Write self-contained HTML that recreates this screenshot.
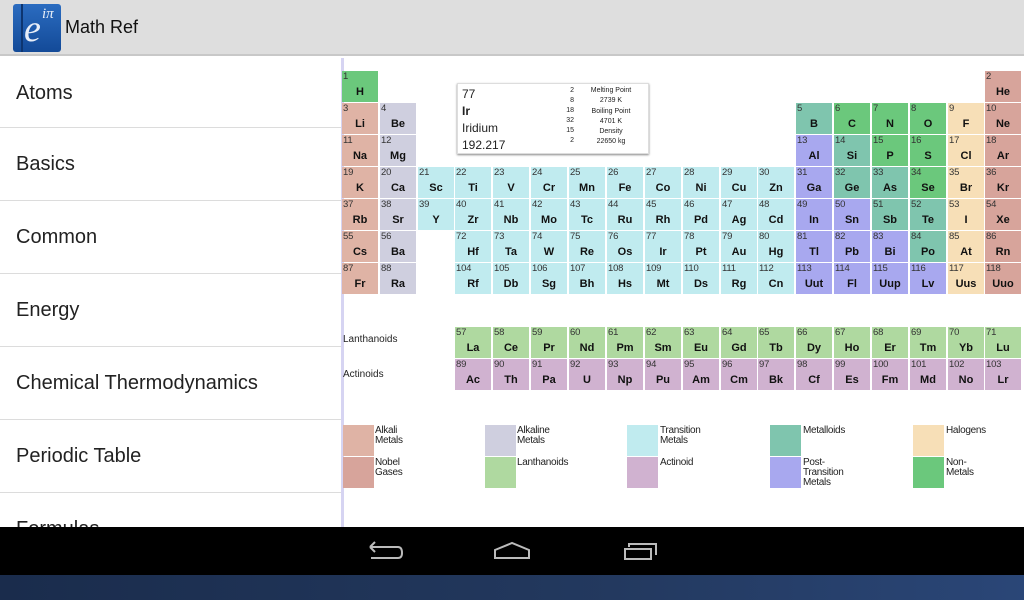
<!DOCTYPE html>
<html><head><meta charset="utf-8"><style>
*{margin:0;padding:0;box-sizing:border-box}
body{width:1024px;height:600px;overflow:hidden;background:#fff;font-family:"Liberation Sans",sans-serif;position:relative}
.top{position:absolute;left:0;top:0;width:1024px;height:56px;background:#dedede;border-bottom:2px solid #c8c8c8}
.logo{position:absolute;left:13px;top:4px;width:48px;height:48px;border-radius:3px;background:linear-gradient(#2b6cc0,#134a98);overflow:hidden}
.logo:before{content:"";position:absolute;left:8px;top:0;width:2px;height:48px;background:#0d3570}
.logo span{position:absolute;left:11px;top:3px;color:#e8eef8;font:italic 38px "Liberation Serif",serif}
.logo sup{position:absolute;left:29px;top:2px;color:#e8eef8;font:italic 15px "Liberation Serif",serif}
.title{position:absolute;left:65px;top:17px;font-size:18px;color:#111}
.side{position:absolute;left:0;top:58px;width:341px;height:469px;overflow:hidden;background:#fff}
.side div{height:73px;border-bottom:1px solid #dcdcdc;font-size:20px;color:#222;padding-left:16px;line-height:72px}
.side div:first-child{height:70px;line-height:70px}
.vl{position:absolute;left:341px;top:58px;width:3px;height:469px;background:#d6d4f2}
.r{position:absolute;left:0;width:1024px}
.k{position:absolute;width:36px;height:31px;font-weight:bold;font-size:11px;text-align:center;padding-top:14px;line-height:14px;color:#111}
.k i{position:absolute;left:1px;top:0;font-style:normal;font-weight:normal;font-size:9.5px;line-height:11px;color:#333;letter-spacing:-.2px}
.a{background:#dfb3a5}.e{background:#cfcfdf}.t{background:#c0ebef}.m{background:#7fc5ae}.n{background:#6bc87c}.h{background:#f7dfb7}.g{background:#d7a49b}.p{background:#a8a8ef}.l{background:#afd9a0}.x{background:#d0b2d0}
.pop{position:absolute;left:457px;top:83px;width:192px;height:71px;background:#fff;border:1px solid #ddd;box-shadow:0 1px 2px #888;font-size:12px;color:#222}
.pop .b{position:absolute;left:4px;top:2px;line-height:17px}
.pop .s{position:absolute;left:100px;top:2px;width:16px;text-align:right;font-size:7px;line-height:10px}
.pop .d{position:absolute;left:120px;top:2px;width:66px;text-align:center;font-size:7px;line-height:10.3px}
.lab{position:absolute;left:343px;font-size:10px;color:#222}
.lg{position:absolute;width:31px;height:31px}
.lt{position:absolute;font-size:10px;line-height:10px;color:#222;letter-spacing:-.3px}
.nav{position:absolute;left:0;top:527px;width:1024px;height:48px;background:#000}
.bg{position:absolute;left:0;top:575px;width:1024px;height:25px;background:linear-gradient(90deg,#1a2c4c,#23395f 60%,#2a4677)}
</style></head><body>
<div class="top"><div class="logo"><span>e</span><sup>iπ</sup></div><div class="title">Math Ref</div></div>
<div class="side"><div>Atoms</div><div>Basics</div><div>Common</div><div>Energy</div><div>Chemical Thermodynamics</div><div>Periodic Table</div><div>Formulas</div></div>
<div class="vl"></div>

<div class="r" style="top:71px">
<div class="k n" style="left:342px"><i>1</i>H</div>
<div class="k g" style="left:985px"><i>2</i>He</div>
</div>
<div class="r" style="top:103px">
<div class="k a" style="left:342px"><i>3</i>Li</div><div class="k e" style="left:380px"><i>4</i>Be</div>
<div class="k m" style="left:796px"><i>5</i>B</div><div class="k n" style="left:834px"><i>6</i>C</div><div class="k n" style="left:872px"><i>7</i>N</div><div class="k n" style="left:910px"><i>8</i>O</div><div class="k h" style="left:948px"><i>9</i>F</div><div class="k g" style="left:985px"><i>10</i>Ne</div>
</div>
<div class="r" style="top:135px">
<div class="k a" style="left:342px"><i>11</i>Na</div><div class="k e" style="left:380px"><i>12</i>Mg</div>
<div class="k p" style="left:796px"><i>13</i>Al</div><div class="k m" style="left:834px"><i>14</i>Si</div><div class="k n" style="left:872px"><i>15</i>P</div><div class="k n" style="left:910px"><i>16</i>S</div><div class="k h" style="left:948px"><i>17</i>Cl</div><div class="k g" style="left:985px"><i>18</i>Ar</div>
</div>
<div class="r" style="top:167px">
<div class="k a" style="left:342px"><i>19</i>K</div><div class="k e" style="left:380px"><i>20</i>Ca</div>
<div class="k t" style="left:418px"><i>21</i>Sc</div><div class="k t" style="left:455px"><i>22</i>Ti</div><div class="k t" style="left:493px"><i>23</i>V</div><div class="k t" style="left:531px"><i>24</i>Cr</div><div class="k t" style="left:569px"><i>25</i>Mn</div><div class="k t" style="left:607px"><i>26</i>Fe</div><div class="k t" style="left:645px"><i>27</i>Co</div><div class="k t" style="left:683px"><i>28</i>Ni</div><div class="k t" style="left:721px"><i>29</i>Cu</div><div class="k t" style="left:758px"><i>30</i>Zn</div>
<div class="k p" style="left:796px"><i>31</i>Ga</div><div class="k m" style="left:834px"><i>32</i>Ge</div><div class="k m" style="left:872px"><i>33</i>As</div><div class="k n" style="left:910px"><i>34</i>Se</div><div class="k h" style="left:948px"><i>35</i>Br</div><div class="k g" style="left:985px"><i>36</i>Kr</div>
</div>
<div class="r" style="top:199px">
<div class="k a" style="left:342px"><i>37</i>Rb</div><div class="k e" style="left:380px"><i>38</i>Sr</div>
<div class="k t" style="left:418px"><i>39</i>Y</div><div class="k t" style="left:455px"><i>40</i>Zr</div><div class="k t" style="left:493px"><i>41</i>Nb</div><div class="k t" style="left:531px"><i>42</i>Mo</div><div class="k t" style="left:569px"><i>43</i>Tc</div><div class="k t" style="left:607px"><i>44</i>Ru</div><div class="k t" style="left:645px"><i>45</i>Rh</div><div class="k t" style="left:683px"><i>46</i>Pd</div><div class="k t" style="left:721px"><i>47</i>Ag</div><div class="k t" style="left:758px"><i>48</i>Cd</div>
<div class="k p" style="left:796px"><i>49</i>In</div><div class="k p" style="left:834px"><i>50</i>Sn</div><div class="k m" style="left:872px"><i>51</i>Sb</div><div class="k m" style="left:910px"><i>52</i>Te</div><div class="k h" style="left:948px"><i>53</i>I</div><div class="k g" style="left:985px"><i>54</i>Xe</div>
</div>
<div class="r" style="top:231px">
<div class="k a" style="left:342px"><i>55</i>Cs</div><div class="k e" style="left:380px"><i>56</i>Ba</div>
<div class="k t" style="left:455px"><i>72</i>Hf</div><div class="k t" style="left:493px"><i>73</i>Ta</div><div class="k t" style="left:531px"><i>74</i>W</div><div class="k t" style="left:569px"><i>75</i>Re</div><div class="k t" style="left:607px"><i>76</i>Os</div><div class="k t" style="left:645px"><i>77</i>Ir</div><div class="k t" style="left:683px"><i>78</i>Pt</div><div class="k t" style="left:721px"><i>79</i>Au</div><div class="k t" style="left:758px"><i>80</i>Hg</div>
<div class="k p" style="left:796px"><i>81</i>Tl</div><div class="k p" style="left:834px"><i>82</i>Pb</div><div class="k p" style="left:872px"><i>83</i>Bi</div><div class="k m" style="left:910px"><i>84</i>Po</div><div class="k h" style="left:948px"><i>85</i>At</div><div class="k g" style="left:985px"><i>86</i>Rn</div>
</div>
<div class="r" style="top:263px">
<div class="k a" style="left:342px"><i>87</i>Fr</div><div class="k e" style="left:380px"><i>88</i>Ra</div>
<div class="k t" style="left:455px"><i>104</i>Rf</div><div class="k t" style="left:493px"><i>105</i>Db</div><div class="k t" style="left:531px"><i>106</i>Sg</div><div class="k t" style="left:569px"><i>107</i>Bh</div><div class="k t" style="left:607px"><i>108</i>Hs</div><div class="k t" style="left:645px"><i>109</i>Mt</div><div class="k t" style="left:683px"><i>110</i>Ds</div><div class="k t" style="left:721px"><i>111</i>Rg</div><div class="k t" style="left:758px"><i>112</i>Cn</div>
<div class="k p" style="left:796px"><i>113</i>Uut</div><div class="k p" style="left:834px"><i>114</i>Fl</div><div class="k p" style="left:872px"><i>115</i>Uup</div><div class="k p" style="left:910px"><i>116</i>Lv</div><div class="k h" style="left:948px"><i>117</i>Uus</div><div class="k g" style="left:985px"><i>118</i>Uuo</div>
</div>

<div class="lab" style="top:334px">Lanthanoids</div>
<div class="lab" style="top:369px">Actinoids</div>
<div class="r" style="top:327px">
<div class="k l" style="left:455px"><i>57</i>La</div><div class="k l" style="left:493px"><i>58</i>Ce</div><div class="k l" style="left:531px"><i>59</i>Pr</div><div class="k l" style="left:569px"><i>60</i>Nd</div><div class="k l" style="left:607px"><i>61</i>Pm</div><div class="k l" style="left:645px"><i>62</i>Sm</div><div class="k l" style="left:683px"><i>63</i>Eu</div><div class="k l" style="left:721px"><i>64</i>Gd</div><div class="k l" style="left:758px"><i>65</i>Tb</div><div class="k l" style="left:796px"><i>66</i>Dy</div><div class="k l" style="left:834px"><i>67</i>Ho</div><div class="k l" style="left:872px"><i>68</i>Er</div><div class="k l" style="left:910px"><i>69</i>Tm</div><div class="k l" style="left:948px"><i>70</i>Yb</div><div class="k l" style="left:985px"><i>71</i>Lu</div>
</div>
<div class="r" style="top:359px">
<div class="k x" style="left:455px"><i>89</i>Ac</div><div class="k x" style="left:493px"><i>90</i>Th</div><div class="k x" style="left:531px"><i>91</i>Pa</div><div class="k x" style="left:569px"><i>92</i>U</div><div class="k x" style="left:607px"><i>93</i>Np</div><div class="k x" style="left:645px"><i>94</i>Pu</div><div class="k x" style="left:683px"><i>95</i>Am</div><div class="k x" style="left:721px"><i>96</i>Cm</div><div class="k x" style="left:758px"><i>97</i>Bk</div><div class="k x" style="left:796px"><i>98</i>Cf</div><div class="k x" style="left:834px"><i>99</i>Es</div><div class="k x" style="left:872px"><i>100</i>Fm</div><div class="k x" style="left:910px"><i>101</i>Md</div><div class="k x" style="left:948px"><i>102</i>No</div><div class="k x" style="left:985px"><i>103</i>Lr</div>
</div>

<div class="pop">
<div class="b">77<br><b>Ir</b><br>Iridium<br>192.217</div>
<div class="s">2<br>8<br>18<br>32<br>15<br>2</div>
<div class="d">Melting Point<br>2739 K<br>Boiling Point<br>4701 K<br>Density<br>22650 kg</div>
</div>

<div class="lg a" style="left:343px;top:425px"></div><div class="lt" style="left:375px;top:426px">Alkali<br>Metals</div>
<div class="lg g" style="left:343px;top:457px"></div><div class="lt" style="left:375px;top:458px">Nobel<br>Gases</div>
<div class="lg e" style="left:485px;top:425px"></div><div class="lt" style="left:517px;top:426px">Alkaline<br>Metals</div>
<div class="lg l" style="left:485px;top:457px"></div><div class="lt" style="left:517px;top:458px">Lanthanoids</div>
<div class="lg t" style="left:627px;top:425px"></div><div class="lt" style="left:660px;top:426px">Transition<br>Metals</div>
<div class="lg x" style="left:627px;top:457px"></div><div class="lt" style="left:660px;top:458px">Actinoid</div>
<div class="lg m" style="left:770px;top:425px"></div><div class="lt" style="left:803px;top:426px">Metalloids</div>
<div class="lg p" style="left:770px;top:457px"></div><div class="lt" style="left:803px;top:458px">Post-<br>Transition<br>Metals</div>
<div class="lg h" style="left:913px;top:425px"></div><div class="lt" style="left:946px;top:426px">Halogens</div>
<div class="lg n" style="left:913px;top:457px"></div><div class="lt" style="left:946px;top:458px">Non-<br>Metals</div>

<div class="nav">
<svg width="1024" height="48" style="position:absolute;left:0;top:0" fill="none" stroke="#bbb" stroke-width="2">
<path d="M370 20 L398 20 Q402 20 402 26 Q402 31 398 31 L371 31 M370 20 L375 15 M370 20 L375 25"/>
<path d="M495 31 L495 23 L512 16 L529 23 L529 31 Z"/>
<path d="M625 22 L625 32 L651 32 L651 22 Z M629 20 L629 17 L656 17 L656 28"/>
</svg>
</div>
<div class="bg"></div>
</body></html>
